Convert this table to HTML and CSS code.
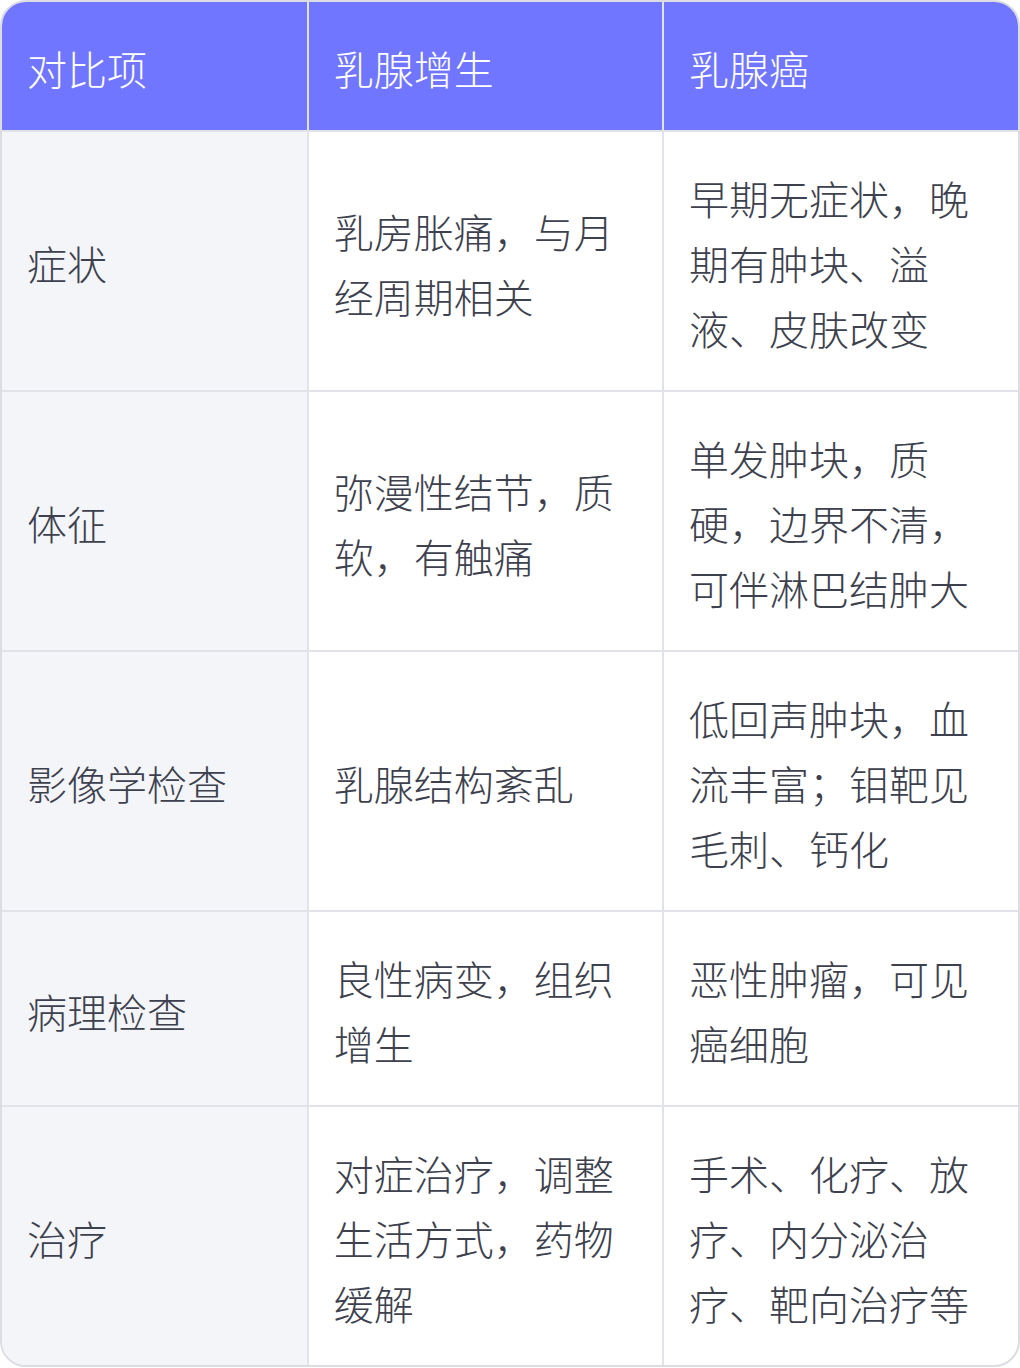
FILE: index.html
```html
<!DOCTYPE html>
<html lang="zh-CN">
<head>
<meta charset="utf-8">
<link rel="stylesheet" href="styles.css">
</head>
<body>
<div class="card">
  <table class="cmp">
    <colgroup>
      <col class="c1"><col class="c2"><col class="c3">
    </colgroup>
    <thead>
      <tr><th>对比项</th><th>乳腺增生</th><th>乳腺癌</th></tr>
    </thead>
    <tbody>
      <tr><td class="label">症状</td><td>乳房胀痛，与月经周期相关</td><td>早期无症状，晚期有肿块、溢液、皮肤改变</td></tr>
      <tr><td class="label">体征</td><td>弥漫性结节，质软，有触痛</td><td>单发肿块，质硬，边界不清，可伴淋巴结肿大</td></tr>
      <tr><td class="label">影像学检查</td><td>乳腺结构紊乱</td><td>低回声肿块，血流丰富；钼靶见毛刺、钙化</td></tr>
      <tr><td class="label">病理检查</td><td>良性病变，组织增生</td><td>恶性肿瘤，可见癌细胞</td></tr>
      <tr><td class="label">治疗</td><td>对症治疗，调整生活方式，药物缓解</td><td>手术、化疗、放疗、内分泌治疗、靶向治疗等</td></tr>
    </tbody>
  </table>
</div>
</body>
</html>
```
FILE: styles.css
```css
html, body {
  margin: 0;
  padding: 0;
  background: #ffffff;
}
.card {
  width: 1020px;
  box-sizing: border-box;
  border: 2px solid #dcdde2;
  border-radius: 26px;
  overflow: hidden;
}
.cmp {
  width: 100%;
  border-collapse: collapse;
  table-layout: fixed;
  font-family: "Noto Sans CJK SC", "Noto Sans", sans-serif;
  font-size: 40px;
  font-weight: 300;
  line-height: 65px;
  color: #3d414e;
}
.c1 { width: 30.1%; }
.c2 { width: 34.95%; }
.c3 { width: 34.95%; }
.cmp th, .cmp td {
  padding: 34px 25px 29px 25px;
  text-align: left;
  vertical-align: middle;
  border: 2px solid #e2e3e8;
  word-break: break-all;
}
.cmp tr > :first-child { border-left: none; }
.cmp tr > :last-child { border-right: none; }
.cmp thead th { border-top: none; }
.cmp tbody tr:last-child td { border-bottom: none; }
.cmp th {
  background: #7076ff;
  color: #ffffff;
  font-weight: 300;
}
.cmp td.label {
  background: #f4f5f9;
}
```
